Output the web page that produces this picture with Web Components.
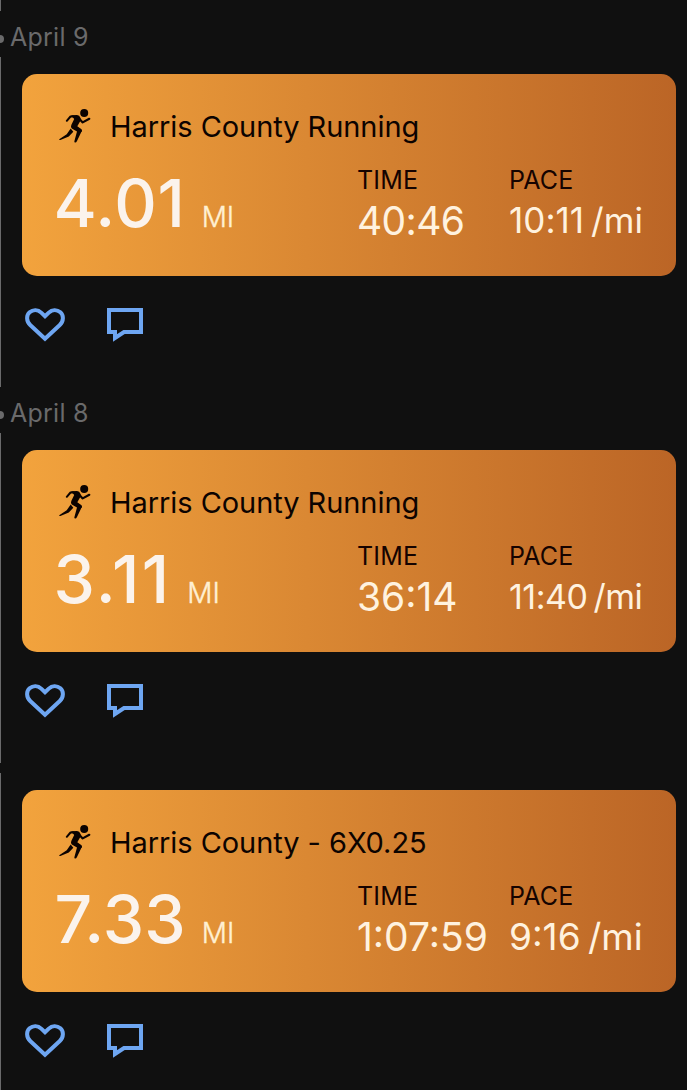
<!DOCTYPE html>
<html lang="en">
<head>
<meta charset="utf-8">
<meta name="viewport" content="width=device-width, initial-scale=1">
<title>Activity feed</title>
<style>
  html { background: #101010; }

  body {
    --feed-muted: #6a6a6b;
    --feed-accent: #6ea6f2;
    margin: 0;
    height: 1090px;
    overflow: hidden;
    font-family: Inter, "Liberation Sans", sans-serif;
  }
</style>
</head>
<body>

<activity-feed>
  <feed-date>April 9</feed-date>
  <feed-entry>
    <run-card name="Harris County Running" distance="4.01" time="40:46" pace="10:11 /mi"
      style="--distance-spacing: 0.7px; --time-spacing: -0.6px; --pace-size: 35px; --pace-spacing: 0.05px"></run-card>
  </feed-entry>

  <feed-date>April 8</feed-date>
  <feed-entry>
    <run-card name="Harris County Running" distance="3.11" time="36:14" pace="11:40 /mi"
      style="--distance-spacing: 2.2px; --pace-size: 34px; --pace-spacing: -0.5px"></run-card>
  </feed-entry>

  <feed-entry continued>
    <run-card name="Harris County - 6X0.25" distance="7.33" time="1:07:59" pace="9:16 /mi"
      style="--distance-indent: 1.5px; --distance-spacing: 0.2px; --pace-size: 37px; --pace-spacing: 0"></run-card>
  </feed-entry>
</activity-feed>

<script>
const define = (name, html, setup) => {
  const template = document.createElement('template')
  template.innerHTML = html

  customElements.define(name, class extends HTMLElement {
    constructor() {
      super();
      this.attachShadow({ mode: 'open' });
      this.shadowRoot.append(template.content.cloneNode(true));
    }

    connectedCallback() {
      if (setup) setup(this, this.shadowRoot);
    }
  });
}

define('activity-feed', `
  <style>
    :host {
      display: flex;
      flex-direction: column;
    }

    /* tail of the rail from the entry above */
    .tail {
      width: 1px;
      height: 11px;
      background: var(--feed-muted);
    }
  </style>
  <div class="tail"></div>
  <slot></slot>
`)

define('feed-date', `
  <style>
    :host {
      display: flex;
      align-items: center;
      height: 46px;
      color: var(--feed-muted);
      font-size: 25px;
      line-height: 30px;
      letter-spacing: 0.25px;
      white-space: nowrap;
    }

    .dot {
      width: 8px;
      height: 8px;
      margin: 9px 6px 0 -4px;
      border-radius: 50%;
      background: currentColor;
    }

    .text { margin-top: 6px; }
  </style>
  <span class="dot"></span>
  <span class="text"><slot></slot></span>
`)

define('feed-entry', `
  <style>
    :host {
      display: block;
      box-sizing: border-box;
      height: 330px;
      padding: 17px 11px 0 21px;
      border-left: 1px solid var(--feed-muted);
    }

    :host([continued]) { margin-top: 10px; }
  </style>
  <slot></slot>
  <entry-actions></entry-actions>
`)

define('entry-actions', `
  <style>
    :host {
      display: flex;
      gap: 42px;
      padding: 31px 0 0 3px;
      color: var(--feed-accent);
    }

    svg {
      display: block;
      fill: none;
      stroke: currentColor;
      stroke-width: 4;
    }
  </style>
  <svg width="40" height="36" viewBox="0 0 40 36" role="img" aria-label="Like">
    <path d="M20 31.8 5.2 18C1.2 14.200 1.2 8.300 4.6 5.300 8.2 2.200 13 2.600 16.200 5.600L20 9.300l3.800-3.700C27 2.600 31.800 2.200 35.400 5.300c3.400 3 3.400 8.900-.6 12.700z"/>
  </svg>
  <svg width="36" height="36" viewBox="0 0 36 36" role="img" aria-label="Comment">
    <path d="M2 3H34V25H17L8 31V25H2Z"/>
  </svg>
`)

define('run-icon', `
  <style>
    :host { display: block; }

    svg {
      display: block;
      fill: currentColor;
    }

    .limb {
      fill: none;
      stroke: currentColor;
      stroke-linecap: round;
      stroke-linejoin: round;
    }
  </style>
  <svg width="32" height="36" viewBox="0 0 32 36">
    <circle cx="25.200" cy="5" r="4"/>
    <path d="M12 7.200 18 7Q20.600 7.200 21.400 9.800L21.900 12 18.300 18.300 22.500 21.300Q23.400 22.300 22.800 23.600L20.500 25 12.800 20.600Q11.400 19.300 12.300 17L15.200 11Z"/>
    <path class="limb" stroke-width="2" d="M14.500 8.400 11.500 8.500 7.800 12.800"/>
    <path class="limb" stroke-width="2.200" d="M20 10.500 23.700 14.400 30.300 10.800"/>
    <path d="M18.400 22 22.900 22.800 18 33Q17 35 15.900 34.500 15 34.200 15.500 32.700Z"/>
    <path d="M11.700 20.500 14.300 23.800 9.800 28.400 1.400 32Q-.2 32.200.2 31.200L7.700 26.300Z"/>
  </svg>
`)

define('run-stat', `
  <style>
    :host {
      display: block;
      white-space: nowrap;
    }

    .label {
      color: #150300;
      font-size: 25px;
      line-height: 30px;
      letter-spacing: 0.15px;
    }

    .value {
      color: #fff2df;
      font-size: var(--stat-size, 39px);
      line-height: 51px;
      letter-spacing: var(--stat-spacing, 0);
      word-spacing: -3px;
    }
  </style>
  <div class="label"></div>
  <div class="value"><slot></slot></div>
`, (el, root) => {
  root.querySelector('.label').textContent = el.getAttribute('label');
})

define('run-card', `
  <style>
    :host {
      display: block;
      box-sizing: border-box;
      height: 202px;
      padding: 34px 0 0 31px;
      border-radius: 15px;
      background: linear-gradient(90deg, #f2a33d, #bb6526);
      color: #0c0300;
    }

    header {
      display: flex;
      height: 36px;
      font-size: 29px;
      line-height: 38px;
      letter-spacing: -0.06px;
      white-space: nowrap;
    }

    run-icon {
      margin: 0 19px 0 6px;
    }

    .stats {
      display: grid;
      grid-template-columns: 304px 152px 1fr;
      padding-top: 21px;
    }

    .distance {
      display: flex;
      align-items: baseline;
      gap: 16px;
      padding: 2px 0 0 var(--distance-indent, 0.5px);
      line-height: 72px;
      color: #fbf3ec;
    }

    .miles {
      font-size: 66px;
      font-weight: 500;
      letter-spacing: var(--distance-spacing);
    }

    .unit {
      font-size: 28px;
      font-weight: 300;
      color: #fff0d2;
      -webkit-text-stroke: 0.4px currentColor;
    }

    .time {
      --stat-spacing: var(--time-spacing);
    }

    .pace {
      --stat-size: var(--pace-size);
      --stat-spacing: var(--pace-spacing);
    }
  </style>
  <header>
    <run-icon></run-icon>
    <span class="name"></span>
  </header>
  <div class="stats">
    <div class="distance"><span class="miles"></span><span class="unit">MI</span></div>
    <run-stat class="time" label="TIME"></run-stat>
    <run-stat class="pace" label="PACE"></run-stat>
  </div>
`, (el, root) => {
  root.querySelector('.name').textContent = el.getAttribute('name');
  root.querySelector('.miles').textContent = el.getAttribute('distance');
  root.querySelector('.time').textContent = el.getAttribute('time');
  root.querySelector('.pace').textContent = el.getAttribute('pace');
})
</script>
</body>
</html>
